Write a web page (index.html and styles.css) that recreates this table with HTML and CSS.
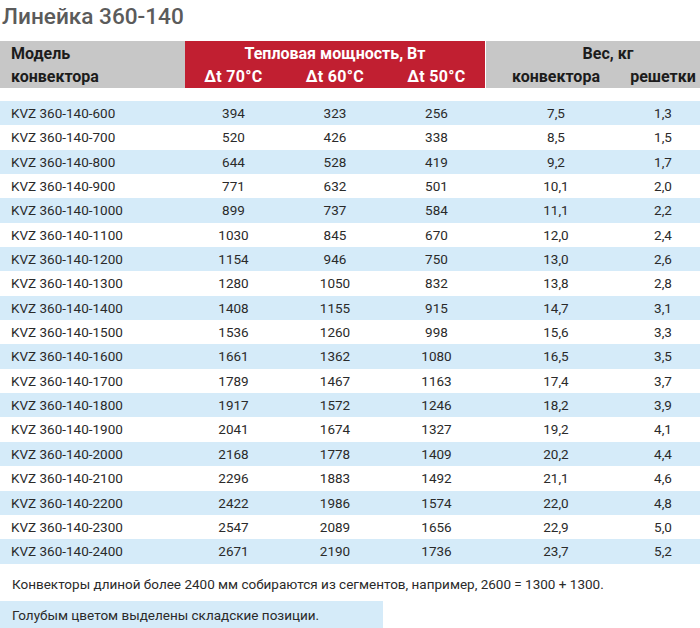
FILE: index.html
```html
<!DOCTYPE html>
<html lang="ru">
<head>
<meta charset="utf-8">
<title>Линейка 360-140</title>
<link rel="stylesheet" href="styles.css">
</head>
<body>
<h1 class="title">Линейка 360-140</h1>
<div class="head">
  <div class="hg hg-model">
    <div class="hl">Модель</div>
    <div class="hl">конвектора</div>
  </div>
  <div class="hg hg-power">
    <div class="hl hl-center">Тепловая мощность, Вт</div>
    <div class="hsub hsub-power">
      <span>Δt 70°C</span><span>Δt 60°C</span><span>Δt 50°C</span>
    </div>
  </div>
  <div class="hg hg-weight">
    <div class="hl hl-weight">Вес, кг</div>
    <div class="hsub hsub-weight">
      <span>конвектора</span><span>решетки</span>
    </div>
  </div>
</div>
<div class="rows">
  <div class="row"><span>KVZ 360-140-600</span><span>394</span><span>323</span><span>256</span><span></span><span>7,5</span><span>1,3</span></div>
  <div class="row"><span>KVZ 360-140-700</span><span>520</span><span>426</span><span>338</span><span></span><span>8,5</span><span>1,5</span></div>
  <div class="row"><span>KVZ 360-140-800</span><span>644</span><span>528</span><span>419</span><span></span><span>9,2</span><span>1,7</span></div>
  <div class="row"><span>KVZ 360-140-900</span><span>771</span><span>632</span><span>501</span><span></span><span>10,1</span><span>2,0</span></div>
  <div class="row"><span>KVZ 360-140-1000</span><span>899</span><span>737</span><span>584</span><span></span><span>11,1</span><span>2,2</span></div>
  <div class="row"><span>KVZ 360-140-1100</span><span>1030</span><span>845</span><span>670</span><span></span><span>12,0</span><span>2,4</span></div>
  <div class="row"><span>KVZ 360-140-1200</span><span>1154</span><span>946</span><span>750</span><span></span><span>13,0</span><span>2,6</span></div>
  <div class="row"><span>KVZ 360-140-1300</span><span>1280</span><span>1050</span><span>832</span><span></span><span>13,8</span><span>2,8</span></div>
  <div class="row"><span>KVZ 360-140-1400</span><span>1408</span><span>1155</span><span>915</span><span></span><span>14,7</span><span>3,1</span></div>
  <div class="row"><span>KVZ 360-140-1500</span><span>1536</span><span>1260</span><span>998</span><span></span><span>15,6</span><span>3,3</span></div>
  <div class="row"><span>KVZ 360-140-1600</span><span>1661</span><span>1362</span><span>1080</span><span></span><span>16,5</span><span>3,5</span></div>
  <div class="row"><span>KVZ 360-140-1700</span><span>1789</span><span>1467</span><span>1163</span><span></span><span>17,4</span><span>3,7</span></div>
  <div class="row"><span>KVZ 360-140-1800</span><span>1917</span><span>1572</span><span>1246</span><span></span><span>18,2</span><span>3,9</span></div>
  <div class="row"><span>KVZ 360-140-1900</span><span>2041</span><span>1674</span><span>1327</span><span></span><span>19,2</span><span>4,1</span></div>
  <div class="row"><span>KVZ 360-140-2000</span><span>2168</span><span>1778</span><span>1409</span><span></span><span>20,2</span><span>4,4</span></div>
  <div class="row"><span>KVZ 360-140-2100</span><span>2296</span><span>1883</span><span>1492</span><span></span><span>21,1</span><span>4,6</span></div>
  <div class="row"><span>KVZ 360-140-2200</span><span>2422</span><span>1986</span><span>1574</span><span></span><span>22,0</span><span>4,8</span></div>
  <div class="row"><span>KVZ 360-140-2300</span><span>2547</span><span>2089</span><span>1656</span><span></span><span>22,9</span><span>5,0</span></div>
  <div class="row"><span>KVZ 360-140-2400</span><span>2671</span><span>2190</span><span>1736</span><span></span><span>23,7</span><span>5,2</span></div>
</div>
<p class="note">Конвекторы длиной более 2400 мм собираются из сегментов, например, 2600 = 1300 + 1300.</p>
<p class="legend">Голубым цветом выделены складские позиции.</p>
</body>
</html>
```
FILE: styles.css
```css
html, body {
  margin: 0;
  padding: 0;
  background: #ffffff;
}
body {
  width: 700px;
  height: 628px;
  overflow: hidden;
  font-family: Roboto, "Liberation Sans", sans-serif;
  font-size: 13.5px;
  color: #2a2a2a;
}
.title {
  margin: 0;
  padding: 0 0 0 2px;
  height: 41px;
  line-height: 33px;
  font-size: 22.6px;
  font-weight: 500;
  color: #5b5b5b;
}
.head {
  display: flex;
  height: 47px;
  font-weight: 700;
  font-size: 16px;
  color: #1c1c1c;
}
.hg {
  display: flex;
  flex-direction: column;
  padding-top: 1px;
}
.hl {
  height: 23px;
  line-height: 23px;
}
.hg-model {
  width: 185px;
  padding-left: 11px;
  box-sizing: border-box;
  background: #c7c7c7;
}
.hg-power {
  width: 300px;
  background: #c11f31;
  color: #ffffff;
}
.hg-weight {
  flex: 1;
  margin-left: 1px;
  background: #c7c7c7;
}
.hl-center {
  text-align: center;
}
.hl-weight {
  text-align: center;
  padding-left: 30px;
}
.hsub {
  display: grid;
  height: 23px;
  line-height: 23px;
  text-align: center;
}
.hsub-power {
  grid-template-columns: 97px 106px 97px;
  letter-spacing: 0.3px;
}
.hsub-weight {
  grid-template-columns: 140px 74px;
}
.rows {
  margin-top: 13px;
}
.row {
  display: grid;
  grid-template-columns: 185px 97px 106px 97px 1px 140px 74px;
  height: 24.35px;
  line-height: 24.35px;
  text-align: center;
}
.row:nth-child(odd) {
  background: #d5ebf9;
}
.row span:first-child {
  text-align: left;
  padding-left: 11px;
}
.note {
  margin: 9px 0 0 0;
  padding-left: 12px;
  line-height: 22px;
  height: 22px;
}
.legend {
  margin: 6px 0 0 0;
  width: 383px;
  height: 28px;
  line-height: 28px;
  padding-left: 12px;
  box-sizing: border-box;
  background: #d5ebf9;
}
```
